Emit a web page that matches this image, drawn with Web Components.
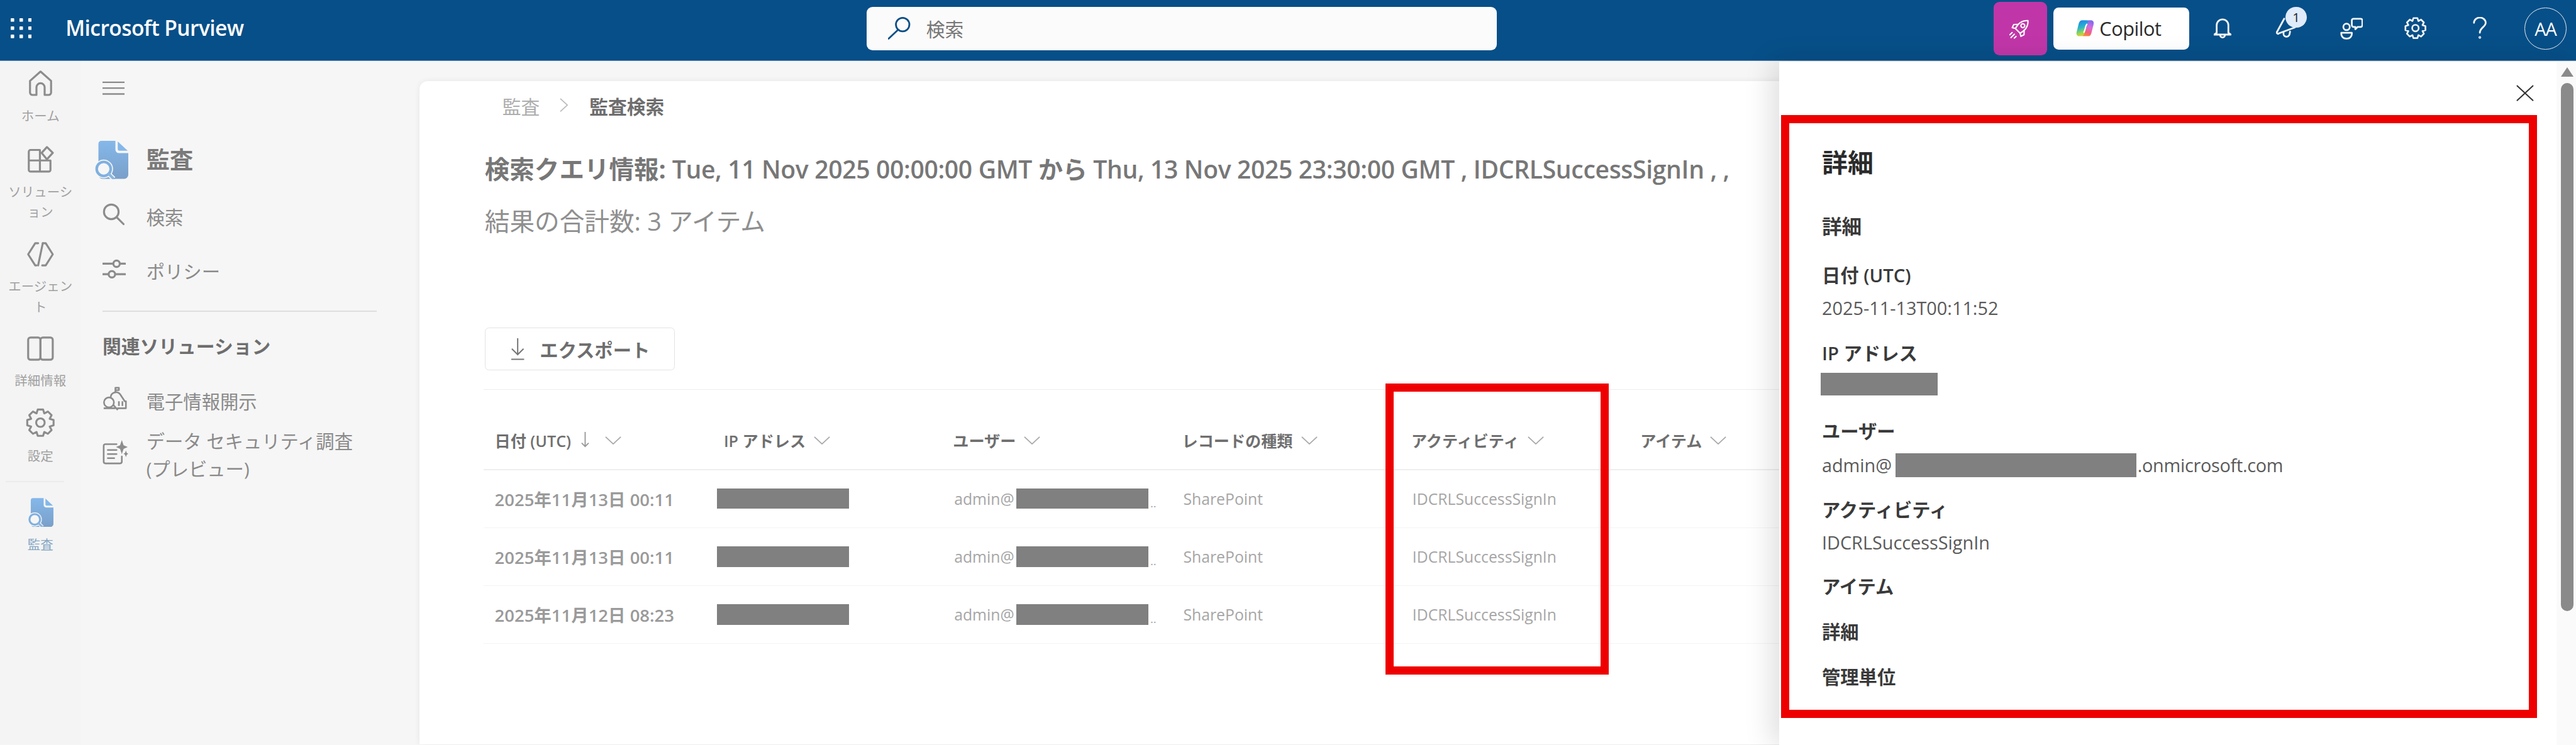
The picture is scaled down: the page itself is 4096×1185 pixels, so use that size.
<!DOCTYPE html>
<html lang="ja">
<head>
<meta charset="utf-8">
<title>Microsoft Purview</title>
<style>
    html, body { margin: 0; padding: 0; overflow: hidden; background: #f6f6f6; }
</style>
</head>
<body>
<audit-app></audit-app>
<script>
function gear(size, color, sw) {
    // 8 teeth, drawn on a 48 box
    let d = '';
    const n = 8;
    for (let i = 0; i < n; i++) {
        const a = i * Math.PI * 2 / n - Math.PI / 2;
        const pts = [[16.5, -0.39], [22, -0.2], [22, 0.2], [16.5, 0.39]];
        for (const [r, o] of pts) {
            const x = 24 + r * Math.cos(a + o), y = 24 + r * Math.sin(a + o);
            d += (d ? 'L' : 'M') + x.toFixed(1) + ' ' + y.toFixed(1) + ' ';
        }
    }
    return `<svg width="${size}" height="${size}" viewBox="0 0 48 48" fill="none" stroke="${color}" stroke-width="${sw}" stroke-linejoin="round"><path d="${d}Z"/><circle cx="24" cy="24" r="7"/></svg>`;
}

function auditIcon(w, h, id) {
    return `<svg width="${w}" height="${h}" viewBox="0 0 58 65" fill="none">
        <defs><linearGradient id="${id}" x1="0" y1="0" x2="0" y2="1"><stop offset="0" stop-color="#84b8ea"/><stop offset="1" stop-color="#7a9fc9"/></linearGradient></defs>
        <path d="M12 0H36V15a6 6 0 0 0 6 6H58V58a7 7 0 0 1-7 7H14a7 7 0 0 1-7-7V5a5 5 0 0 1 5-5Z" fill="url(#${id})"/>
        <path d="M40 1L57 17H43a3 3 0 0 1-3-3Z" fill="#84b8ea"/>
        <circle cx="16" cy="48" r="12" fill="#f6f6f6" stroke="#f6f6f6" stroke-width="8"/>
        <path d="M25 57L33 65" stroke="#f6f6f6" stroke-width="8"/>
        <circle cx="16" cy="48" r="12" stroke="#7fb0e0" stroke-width="4.5"/>
        <path d="M25 57L33 65" stroke="#8ab6e0" stroke-width="4.5" stroke-linecap="round"/>
    </svg>`;
}

const chevron = `<svg width="28" height="14" viewBox="0 0 28 14" fill="none" stroke="#aaa" stroke-width="2"><path d="M1 1L14 13L27 1"/></svg>`;
const grey = 'fill="none" stroke="#8c8c8c" stroke-width="3.4" stroke-linejoin="round" stroke-linecap="round"';
const white = 'fill="none" stroke="#f2f5f9" stroke-width="3" stroke-linejoin="round" stroke-linecap="round"';

const ICONS = {
    home: `<svg width="44" height="46" viewBox="0 0 44 46" ${grey}><path d="M4 19L22 3L40 19V39a4 4 0 0 1-4 4H29V30a7 7 0 0 0-14 0V43H8a4 4 0 0 1-4-4Z"/></svg>`,
    solutions: `<svg width="46" height="46" viewBox="0 0 46 46" ${grey}><path d="M3 10a3 3 0 0 1 3-3H22V25H3ZM3 25H22V44H6a3 3 0 0 1-3-3ZM22 25H40V41a3 3 0 0 1-3 3H22Z"/><path d="M34 2L44 12L34 23L25 12Z"/></svg>`,
    agents: `<svg width="48" height="44" viewBox="0 0 48 44" ${grey}><path d="M20 3H15L3 22L15 41H17M28 3H33L45 22L33 41H27"/><path d="M28 3L20 41"/></svg>`,
    insights: `<svg width="48" height="44" viewBox="0 0 48 44" ${grey}><rect x="3" y="3" width="21" height="38" rx="4"/><rect x="24" y="3" width="21" height="38" rx="4"/></svg>`,
    settings: gear(50, '#8c8c8c', 3.2),
    menu: `<svg width="38" height="24" viewBox="0 0 38 24" stroke="#8a8a8a" stroke-width="2.6"><path d="M0 2H38M0 12H38M0 22H38"/></svg>`,
    search: `<svg width="38" height="38" viewBox="0 0 38 38" ${grey}><circle cx="15" cy="15" r="12.5"/><path d="M24 24L36 36"/></svg>`,
    policy: `<svg width="40" height="34" viewBox="0 0 40 34" ${grey}><path d="M1 8H18M30 8H39M1 26H10M22 26H39"/><circle cx="24" cy="8" r="5.5"/><circle cx="16" cy="26" r="5.5"/></svg>`,
    ediscovery: `<svg width="42" height="42" viewBox="0 0 42 42" fill="none" stroke="#8c8c8c" stroke-width="2.8" stroke-linejoin="round"><path d="M22 12V3H28V7H22"/><path d="M14 20a9 9 0 0 1 16-6l8 12H40V38H25"/><circle cx="11" cy="28" r="8.5"/><path d="M2 38H22M19 33L26 41M28 26V34M34 26V34"/></svg>`,
    dsi: `<svg width="44" height="44" viewBox="0 0 44 44" fill="none" stroke="#8c8c8c" stroke-width="2.8" stroke-linejoin="round" stroke-linecap="round"><path d="M24 8H5a3 3 0 0 0-3 3V38a3 3 0 0 0 3 3H30a3 3 0 0 0 3-3V29"/><path d="M9 18H24M9 25H24M9 32H20"/><path d="M33 1L36 10L43 13L36 16L33 25L30 16L23 13L30 10Z" fill="#8c8c8c" stroke="none"/><path d="M40 19L41.500 23L44 24.500L41.500 26L40 30L38.500 26L36 24.500L38.500 23Z" fill="#8c8c8c" stroke="none"/></svg>`,
    grid: `<svg width="36" height="34" viewBox="0 0 36 34" fill="#fff"><rect x="0" y="0" width="6" height="6" rx="1"/><rect x="15" y="0" width="6" height="6" rx="1"/><rect x="30" y="0" width="6" height="6" rx="1"/><rect x="0" y="14" width="6" height="6" rx="1"/><rect x="15" y="14" width="6" height="6" rx="1"/><rect x="30" y="14" width="6" height="6" rx="1"/><rect x="0" y="28" width="6" height="6" rx="1"/><rect x="15" y="28" width="6" height="6" rx="1"/><rect x="30" y="28" width="6" height="6" rx="1"/></svg>`,
    lens: `<svg width="38" height="38" viewBox="0 0 38 38" fill="none" stroke="#0b4f86" stroke-width="3" stroke-linecap="round"><circle cx="25" cy="13" r="11.500"/><path d="M17 22L1 37"/></svg>`,
    rocket: `<svg width="38" height="38" viewBox="0 0 40 40" fill="none" stroke="#fff" stroke-width="2.400" stroke-linejoin="round" stroke-linecap="round"><g transform="rotate(45 20 20)"><path d="M20 1C28 8 29 17 26 27H14C11 17 12 8 20 1Z"/><circle cx="20" cy="14" r="3.500"/><path d="M12.500 18L7 24L9 30L14 27M27.500 18L33 24L31 30L26 27"/></g><path d="M5 28L1 32M9 31L3 37M12 35L9 38"/></svg>`,
    copilot: `<svg width="31" height="30" viewBox="0 0 32 30">
        <defs>
            <linearGradient id="cpa" x1="0.3" y1="0" x2="0.5" y2="1"><stop offset="0" stop-color="#1a86ea"/><stop offset=".45" stop-color="#2bb6c8"/><stop offset=".8" stop-color="#9ed84a"/><stop offset="1" stop-color="#f2c53a"/></linearGradient>
            <linearGradient id="cpb" x1="0.7" y1="0" x2="0.4" y2="1"><stop offset="0" stop-color="#7a6cf0"/><stop offset=".4" stop-color="#d46be0"/><stop offset=".75" stop-color="#f4607e"/><stop offset="1" stop-color="#f78a32"/></linearGradient>
        </defs>
        <path d="M22 29H13C10 29 9 27 10 25L16 6C17 3 19 1 22 1H26C30 1 32 4 31 8L27 24C26 27 25 29 22 29Z" fill="url(#cpb)"/>
        <path d="M11 1H19C21 1 22 3 21 5L15 24C14 27 12 29 9 29H6C2 29 0 26 1 22L5 6C6 3 8 1 11 1Z" fill="url(#cpa)"/>
        <path d="M19 8C16 12 17 16 14 22" fill="none" stroke="#fff" stroke-width="2.400" stroke-linecap="round"/>
    </svg>`,
    bell: `<svg width="30" height="36" viewBox="0 0 30 36" ${white}><path d="M5 26V13a10 10 0 0 1 20 0V26L29 29H1Z"/><path d="M11 30a4 4 0 0 0 8 0"/></svg>`,
    megaphone: `<svg width="38" height="38" viewBox="0 0 38 38" ${white}><path d="M14 3L2 25a2 2 0 0 0 3 3L32 18"/><path d="M13 27a5 5 0 0 0 10 3l1-5"/></svg>`,
    people: `<svg width="40" height="40" viewBox="0 0 40 40" ${white}><circle cx="12" cy="17" r="5.500"/><path d="M3 27H21V29a8 8 0 0 1-8 8H11a8 8 0 0 1-8-8Z"/><path d="M24 3H36a3 3 0 0 1 3 3V14a3 3 0 0 1-3 3H31L27 21V17H24a3 3 0 0 1-3-3V6a3 3 0 0 1 3-3Z"/></svg>`,
    gear: gear(38, '#f2f5f9', 3.6),
    help: `<svg width="26" height="38" viewBox="0 0 26 38" ${white}><path d="M3 10a10 9 0 0 1 20 0c0 7-10 8-10 17"/><circle cx="13" cy="35" r="0.800"/></svg>`,
    close: `<svg width="30" height="28" viewBox="0 0 30 28" stroke="#333" stroke-width="2.200"><path d="M1 1L29 27M29 1L1 27"/></svg>`,
    download: `<svg width="24" height="38" viewBox="0 0 24 38" fill="none" stroke="#777" stroke-width="2.200"><path d="M12 0V28M2 18L12 28L22 18M1 36H23"/></svg>`,
};

class TopBar extends HTMLElement {
    constructor() {
        super();
        this.attachShadow({ mode: 'open' });
    }
    connectedCallback() {
        this.shadowRoot.innerHTML = `
            <style>
                :host { display: flex; align-items: center; height: 103px; background: #074f88; border-bottom: 2px solid #5d8cb3; padding-right: 16px; }
                .brand { width: 1480px; display: flex; align-items: center; flex: none; padding-left: 18px; box-sizing: border-box; }
                .brand svg { margin-bottom: 6px; }
                .title { margin-left: 58px; margin-bottom: 8px; color: #fff; font-size: 36px; font-weight: 600; letter-spacing: -0.6px; }
                .search { width: 1077px; height: 74px; margin-bottom: 6px; box-sizing: border-box; background: #fbfbfb; border-radius: 10px; display: flex; align-items: center; padding-left: 37px; color: #777; font-size: 32px; }
                .search svg { margin-right: 27px; }
                .spacer { flex: 1; }
                .purple { width: 91px; height: 91px; background: #c036a8; border-radius: 10px; display: flex; align-items: center; justify-content: center; margin-bottom: 6px; }
                .copilot { width: 232px; height: 72px; margin: 0 2px 6px 11px; box-sizing: border-box; background: #fff; border-radius: 9px; display: flex; align-items: center; padding-left: 39px; gap: 9px; color: #2b2b2b; font-size: 33px; font-weight: 500; letter-spacing: -0.5px; }
                .slot { width: 110px; height: 60px; display: flex; align-items: center; justify-content: center; position: relative; margin-bottom: 6px; }
                .badge { position: absolute; left: 53px; top: -7px; width: 36px; height: 36px; border-radius: 50%; background: #e0ebfb; color: #222; font-size: 22px; display: flex; align-items: center; justify-content: center; }
                .avatar { width: 72px; height: 72px; margin: 0 0 6px 21px; border: 2px solid #e6edf3; border-radius: 50%; box-sizing: border-box; color: #fff; font-size: 31px; letter-spacing: -1px; display: flex; align-items: center; justify-content: center; }
            </style>
            <div class="brand">${ICONS.grid}<span class="title">Microsoft Purview</span></div>
            <div class="search">${ICONS.lens}<span>検索</span></div>
            <div class="spacer"></div>
            <div class="purple">${ICONS.rocket}</div>
            <div class="copilot">${ICONS.copilot}<span>Copilot</span></div>
            <div class="slot">${ICONS.bell}</div>
            <div class="slot">${ICONS.megaphone}<span class="badge">1</span></div>
            <div class="slot">${ICONS.people}</div>
            <div class="slot">${ICONS.gear}</div>
            <div class="slot">${ICONS.help}</div>
            <div class="avatar">AA</div>
        `;
    }
}
customElements.define('top-bar', TopBar);

class RailItem extends HTMLElement {
    constructor() {
        super();
        this.attachShadow({ mode: 'open' });
    }
    connectedCallback() {
        this.shadowRoot.innerHTML = `
            <style>
                :host { display: flex; flex-direction: column; align-items: center; box-sizing: border-box; color: #a0a0a0; font-size: 22px; line-height: 35px; text-align: center; }
                .icon { height: 48px; display: flex; align-items: center; justify-content: center; margin-bottom: 9px; }
                .label { width: 116px; line-break: anywhere; }
            </style>
            <div class="icon"><slot name="icon"></slot></div>
            <div class="label"><slot></slot></div>
        `;
    }
}
customElements.define('rail-item', RailItem);

class NavRail extends HTMLElement {
    constructor() {
        super();
        this.attachShadow({ mode: 'open' });
    }
    connectedCallback() {
        this.shadowRoot.innerHTML = `
            <style>
                :host { display: block; width: 138px; flex: none; background: #f4f4f4; padding-top: 19px; box-sizing: border-box; }
                hr { border: 0; height: 2px; background: #ebebeb; margin: 0 28px 32px 10px; }
            </style>
            <rail-item style="height:130px"><span slot="icon">${ICONS.home}</span>ホーム</rail-item>
            <rail-item style="height:162px"><span slot="icon">${ICONS.solutions}</span>ソリューション</rail-item>
            <rail-item style="height:161px"><span slot="icon">${ICONS.agents}</span>エージェント</rail-item>
            <rail-item style="height:127px"><span slot="icon">${ICONS.insights}</span>詳細情報</rail-item>
            <rail-item style="height:119px"><span slot="icon">${ICONS.settings}</span><span style="position:relative;top:2px">設定</span></rail-item>
            <hr>
            <rail-item style="color:#86a7c4"><span slot="icon">${auditIcon(44, 50, 'gr1')}</span>監査</rail-item>
        `;
    }
}
customElements.define('nav-rail', NavRail);

class NavLink extends HTMLElement {
    constructor() {
        super();
        this.attachShadow({ mode: 'open' });
    }
    connectedCallback() {
        this.shadowRoot.innerHTML = `
            <style>
                :host { display: flex; align-items: center; color: #8a8a8a; font-size: 31.5px; line-height: 47px; }
                .icon { width: 75px; flex: none; display: flex; align-items: center; }
            </style>
            <div class="icon"><slot name="icon"></slot></div>
            <div><slot></slot></div>
        `;
    }
}
customElements.define('nav-link', NavLink);

class SideNav extends HTMLElement {
    constructor() {
        super();
        this.attachShadow({ mode: 'open' });
    }
    connectedCallback() {
        this.shadowRoot.innerHTML = `
            <style>
                :host { display: block; width: 578px; flex: none; box-sizing: border-box; padding-left: 37px; background: #f6f6f6; }
                .menu { height: 92px; display: flex; align-items: center; }
                .head { height: 110px; margin-top: 20px; display: flex; align-items: center; font-size: 40px; font-weight: 700; color: #7a7a7a; }
                .head span { display: flex; margin: 5px 0 0 -14px; width: 89px; flex: none; }
                nav-link.item { height: 93px; }
                hr { border: 0; height: 2px; background: #dedede; margin: 19px 73px 0 0; }
                .group { height: 60px; margin-top: 27px; display: flex; align-items: center; font-size: 32px; font-weight: 600; color: #6e6e6e; }
                .e { height: 94px; margin-top: 20px; }
                .d { height: 90px; }
            </style>
            <div class="menu">${ICONS.menu}</div>
            <div class="head"><span>${auditIcon(58, 65, 'gr2')}</span>監査</div>
            <nav-link class="item"><span slot="icon">${ICONS.search}</span>検索</nav-link>
            <nav-link class="item"><span slot="icon">${ICONS.policy}</span>ポリシー</nav-link>
            <hr>
            <div class="group">関連ソリューション</div>
            <nav-link class="e"><span slot="icon">${ICONS.ediscovery}</span>電子情報開示</nav-link>
            <nav-link class="d"><span slot="icon">${ICONS.dsi}</span>データ セキュリティ調査<br>(プレビュー)</nav-link>
        `;
    }
}
customElements.define('side-nav', SideNav);

class RedactBar extends HTMLElement {
    constructor() {
        super();
        this.attachShadow({ mode: 'open' });
    }
    connectedCallback() {
        this.shadowRoot.innerHTML = `
            <style>
                :host { display: block; flex: none; background: #808080; width: var(--w, 226px); height: var(--h, 35px); }
            </style>
        `;
    }
}
customElements.define('redact-bar', RedactBar);

class ResultsTable extends HTMLElement {
    constructor() {
        super();
        this.attachShadow({ mode: 'open' });
    }
    connectedCallback() {
        const heads = ['日付 (UTC)', 'IP アドレス', 'ユーザー', 'レコードの種類', 'アクティビティ', 'アイテム'];
        const dates = ['2025年11月13日 00:11', '2025年11月13日 00:11', '2025年11月12日 08:23'];
        const headCells = heads.map((h, i) => `
            <div class="th">${h}${i === 0 ? '<svg class="sort" width="16" height="27" viewBox="0 0 16 27" fill="none" stroke="#999" stroke-width="2"><path d="M8 0V25M2 19L8 25L14 19"/></svg>' : ''}<span class="chev">${chevron}</span></div>
        `).join('');
        const rows = dates.map(d => `
            <div class="row">
                <div class="td date">${d}</div>
                <div class="td ip"><redact-bar></redact-bar></div>
                <div class="td user"><span class="at">admin@</span><redact-bar></redact-bar><span class="more">..</span></div>
                <div class="td">SharePoint</div>
                <div class="td">IDCRLSuccessSignIn</div>
                <div class="td"></div>
            </div>
        `).join('');
        this.shadowRoot.innerHTML = `
            <style>
                :host { display: block; width: 2346px; margin-left: -2px; border-top: 2px solid #eee; }
                .head, .row { display: grid; grid-template-columns: repeat(6, 391.4px); align-items: center; }
                .head { height: 137px; padding-top: 37px; box-sizing: border-box; border-bottom: 3px solid #eeeeee; }
                .row { height: 99px; box-sizing: border-box; border-bottom: 2px solid #f4f4f4; }
                .th { padding-left: 19px; display: flex; align-items: center; color: #6f6f6f; font-size: 27px; font-weight: 600; }
                .chev { display: flex; margin-left: 14px; }
                .sort { margin-left: 16px; margin-right: 12px; }
                .td { padding-left: 21px; color: #a6a6a6; font-size: 26.6px; white-space: nowrap; display: flex; align-items: center; }
                .date { padding-left: 19px; color: #9a9a9a; font-weight: 600; font-size: 29.5px; }
                .ip { padding-left: 7px; }
                .at { width: 106px; overflow: hidden; flex: none; }
                .more { margin: 0 0 0 3px; font-size: 20px; align-self: flex-end; line-height: 20px; }
            </style>
            <div class="head">${headCells}</div>
            ${rows}
        `;
    }
}
customElements.define('results-table', ResultsTable);

class AuditMain extends HTMLElement {
    constructor() {
        super();
        this.attachShadow({ mode: 'open' });
    }
    connectedCallback() {
        this.shadowRoot.innerHTML = `
            <style>
                :host { display: block; flex: 1; min-width: 0; margin-top: 35px; background: #fff; border-radius: 14px 0 0 0; box-shadow: 0 0 10px rgba(0,0,0,.07); padding-left: 112px; box-sizing: border-box; overflow: hidden; }
                .crumb { height: 82px; padding-left: 30px; display: flex; align-items: center; font-size: 32px; color: #adadad; }
                .crumb svg { margin: 0 37px 0 34px; }
                .crumb b { color: #6e6e6e; font-weight: 600; }
                .query { height: 60px; margin-top: 36px; display: flex; align-items: center; font-size: 42px; color: #777; font-weight: 600; white-space: nowrap; letter-spacing: -0.36px; }
                .query b { font-weight: 700; font-size: 42.5px; letter-spacing: 0; }
                .count { height: 60px; margin-top: 29px; display: flex; align-items: center; font-size: 42.6px; color: #8f8f8f; }
                .export { width: 325px; height: 73px; margin-top: 154px; margin-bottom: 32px; box-sizing: border-box; border: 2px solid #e3e3e3; border-radius: 7px; display: flex; align-items: center; padding-left: 43px; gap: 26px; font-size: 31.5px; font-weight: 600; color: #6e6e6e; }
            </style>
            <div class="crumb">監査<svg width="14" height="24" viewBox="0 0 14 24" fill="none" stroke="#bbb" stroke-width="1.800"><path d="M1 1L13 12L1 23"/></svg><b>監査検索</b></div>
            <div class="query"><b>検索クエリ情報:</b>&nbsp;Tue, 11 Nov 2025 00:00:00 GMT から Thu, 13 Nov 2025 23:30:00 GMT , IDCRLSuccessSignIn , ,</div>
            <div class="count">結果の合計数: 3 アイテム</div>
            <div class="export">${ICONS.download}<span>エクスポート</span></div>
            <results-table></results-table>
        `;
    }
}
customElements.define('audit-main', AuditMain);

class DetailField extends HTMLElement {
    constructor() {
        super();
        this.attachShadow({ mode: 'open' });
    }
    connectedCallback() {
        this.shadowRoot.innerHTML = `
            <style>
                :host { display: block; margin-top: var(--gap, 35px); }
                .label { line-height: 44px; font-size: 31.5px; font-weight: 600; color: #3a3a3a; }
                ::slotted(*) { margin-top: var(--sub, 13px); }
            </style>
            <div class="label"><slot name="label"></slot></div>
            <slot></slot>
        `;
    }
}
customElements.define('detail-field', DetailField);

class RedBox extends HTMLElement {
    constructor() {
        super();
        this.attachShadow({ mode: 'open' });
    }
    connectedCallback() {
        this.shadowRoot.innerHTML = `
            <style>
                :host { display: block; box-sizing: border-box; border: 14px solid #ee0000; }
            </style>
            <slot></slot>
        `;
    }
}
customElements.define('red-box', RedBox);

class DetailPanel extends HTMLElement {
    constructor() {
        super();
        this.attachShadow({ mode: 'open' });
    }
    connectedCallback() {
        this.shadowRoot.innerHTML = `
            <style>
                :host { position: absolute; left: 3039px; top: 105px; width: 1361px; height: 1168px; background: #fff; display: flex; box-shadow: -14px 0 44px rgba(0,0,0,.13); }
                .content { flex: 1; padding-left: 3px; }
                .close { height: 92px; width: 1286px; display: flex; align-items: flex-start; justify-content: flex-end; padding-top: 40px; box-sizing: border-box; }
                red-box { width: 1291px; height: 1030px; padding: 37px 0 0 56px; }
                h2 { margin: 0; font-size: 44px; line-height: 60px; font-weight: 700; color: #2b2b2b; }
                .val { display: block; font-size: 31px; line-height: 40px; color: #5a5a5a; }
                .user { display: flex; align-items: center; margin-top: 15px; height: 40px; }
                .user span { width: 126px; overflow: hidden; flex: none; }
                .user em { font-style: normal; margin-left: 2px; letter-spacing: -0.3px; }
                .bar { display: block; }
                .scroll { width: 33px; flex: none; background: #fafafa; position: relative; display: flex; flex-direction: column; align-items: center; }
                .arrow { margin-top: 10px; margin-left: 3px; width: 0; height: 0; border-left: 11px solid transparent; border-right: 11px solid transparent; border-bottom: 17px solid #8a8a8a; }
                .thumb { margin-top: 11px; margin-left: 3px; width: 22px; height: 902px; border-radius: 11px; background: #8a8a8a; }
            </style>
            <div class="content">
                <div class="close">${ICONS.close}</div>
                <red-box>
                    <h2>詳細</h2>
                    <detail-field style="--gap:57px"><span slot="label" style="font-size:34px">詳細</span></detail-field>
                    <detail-field style="--gap:39px"><span slot="label">日付 (UTC)</span><span class="val">2025-11-13T00:11:52</span></detail-field>
                    <detail-field style="--gap:36px"><span slot="label">IP アドレス</span><redact-bar class="bar" style="--w:200px;--h:39px;margin:11px 0 0 -2px"></redact-bar></detail-field>
                    <detail-field style="--gap:40px"><span slot="label">ユーザー</span><div class="val user"><span>admin@</span><redact-bar style="--w:411px;--h:40px"></redact-bar><em>.onmicrosoft.com</em></div></detail-field>
                    <detail-field style="--gap:35px"><span slot="label">アクティビティ</span><span class="val">IDCRLSuccessSignIn</span></detail-field>
                    <detail-field style="--gap:34px"><span slot="label">アイテム</span></detail-field>
                    <detail-field style="--gap:33px"><span slot="label">詳細</span></detail-field>
                    <detail-field style="--gap:34px"><span slot="label">管理単位</span></detail-field>
                </red-box>
            </div>
            <div class="scroll"><div class="arrow"></div><div class="thumb"></div></div>
        `;
    }
}
customElements.define('detail-panel', DetailPanel);

class AuditApp extends HTMLElement {
    constructor() {
        super();
        this.attachShadow({ mode: 'open' });
    }
    connectedCallback() {
        // everything below is written in reference pixels, 4400 wide
        this.shadowRoot.innerHTML = `
            <style>
                :host { display: block; position: relative; zoom: 0.93091; width: 4400px; height: 1273px; overflow: hidden; background: #f6f6f6; font-family: "Open Sans", "Noto Sans CJK JP", sans-serif; }
                .body { display: flex; height: 1168px; }
                .mark { position: absolute; left: 2366px; top: 655px; width: 382px; height: 498px; }
            </style>
            <top-bar></top-bar>
            <div class="body">
                <nav-rail></nav-rail>
                <side-nav></side-nav>
                <audit-main></audit-main>
            </div>
            <red-box class="mark"></red-box>
            <detail-panel></detail-panel>
        `;
    }
}
customElements.define('audit-app', AuditApp);
</script>
</body>
</html>
